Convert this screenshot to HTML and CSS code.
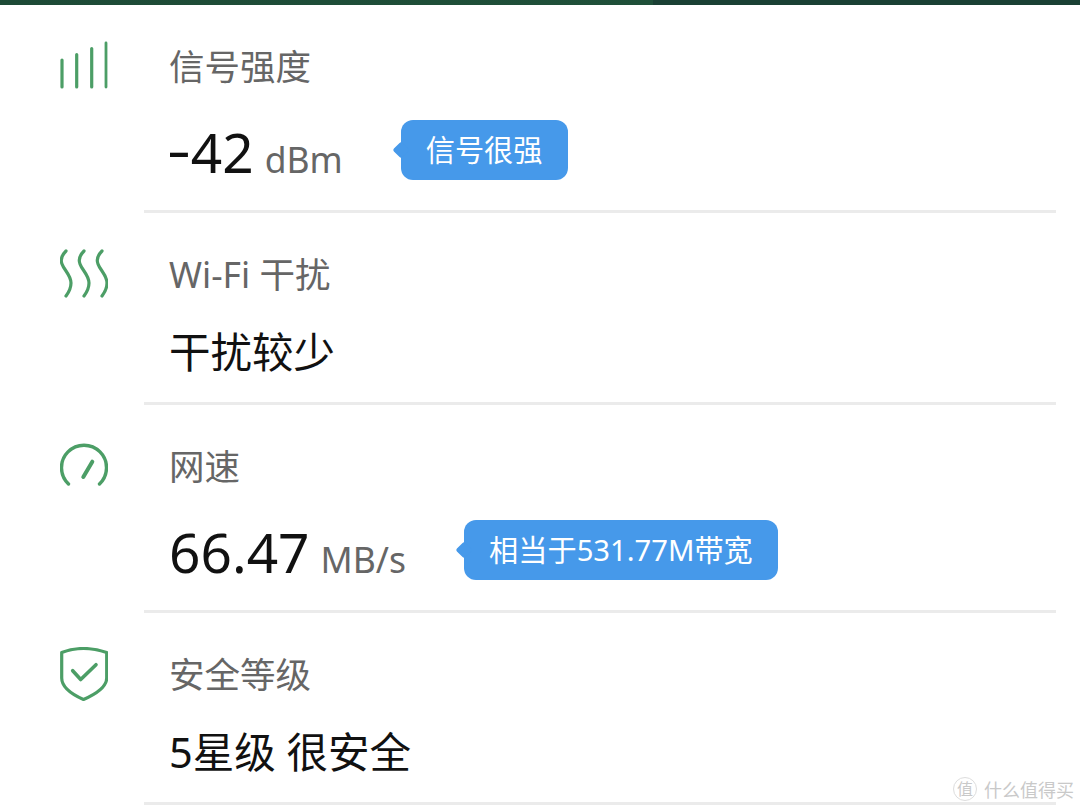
FILE: index.html
```html
<!DOCTYPE html>
<html lang="en">

<head>
    <meta charset="UTF-8">
    <meta name="viewport" content="width=device-width, initial-scale=1.0">
    <title>Wi-Fi</title>
    <link rel="stylesheet" href="styles.css">
</head>

<body>

    <div class="top-bar"></div>

    <div class="row">
        <svg class="row-icon" viewBox="0 0 48 64">
            <path d="M2 48V21M16.700 48V15.500M31.700 48V9.500" stroke-width="3.200" />
            <path d="M46 48V4" stroke-width="2.800" />
        </svg>
        <div class="row-body">
            <div class="row-title">信号强度</div>
            <div class="row-value row-value-tall">
                <span class="big-num"><span class="minus">-</span>42</span>
                <span class="unit">dBm</span>
                <span class="tag">信号很强</span>
            </div>
        </div>
    </div>

    <div class="row">
        <svg class="row-icon" viewBox="0 0 48 64">
            <path d="M6 4C2 8 0 12 2 17C4 23 11 28 11 36C11 41 9 45 6 49" stroke-width="3.200" />
            <path d="M24 4C20 8 18 12 20 17C22 23 29 28 29 36C29 41 27 45 24 49" stroke-width="3.200" />
            <path d="M42 4C38 8 36 12 38 17C40 23 47 28 47 36C47 41 45 45 42 49" stroke-width="3.200" />
        </svg>
        <div class="row-body">
            <div class="row-title">Wi-Fi 干扰</div>
            <div class="row-value">干扰较少</div>
        </div>
    </div>

    <div class="row">
        <svg class="row-icon" viewBox="0 0 48 64">
            <path d="M8.500 45A22.500 22.500 0 1 1 39.500 45" stroke-width="3.400" />
            <path d="M32.300 22.700L23.300 38" stroke-width="4" />
        </svg>
        <div class="row-body">
            <div class="row-title">网速</div>
            <div class="row-value row-value-tall">
                <span class="big-num">66.47</span>
                <span class="unit">MB/s</span>
                <span class="tag">相当于531.77M带宽</span>
            </div>
        </div>
    </div>

    <div class="row">
        <svg class="row-icon" viewBox="0 0 48 64">
            <path d="M1.700 5.500Q12 1.500 23.500 1.500T46.700 5.500V31C46.700 40 36 47 23.500 52.500C11 47 1.700 40 1.700 31Z" stroke-width="3.200" />
            <path d="M12.700 23.700L20.700 32.500L36 17.700" stroke-width="3.600" />
        </svg>
        <div class="row-body">
            <div class="row-title">安全等级</div>
            <div class="row-value">5星级 很安全</div>
        </div>
    </div>

    <div class="watermark">
        <span class="watermark-logo">值</span>
        <span>什么值得买</span>
    </div>

</body>

</html>
```

FILE: styles.css
```css
body,
html {
    margin: 0;
    padding: 0;
    height: 100%;
    width: 100%;
    overflow: hidden;
    background-color: #fff;
    font-family: "Noto Sans", "Noto Sans CJK SC", sans-serif;
}

.top-bar {
    height: 5px;
    background: linear-gradient(90deg, #1d4a36 0, #1f5039 653px, #1a4034 653px);
}

.row {
    display: flex;
    padding-left: 60px;
}

.row-icon {
    flex: none;
    width: 48px;
    height: 64px;
    margin-top: 34px;
    margin-right: 36px;
    fill: none;
    stroke: #4c9e66;
    stroke-linecap: round;
    stroke-linejoin: round;
}

.row-body {
    flex: 1;
    margin-right: 24px;
    padding-top: 44px;
    padding-left: 25px;
    padding-bottom: 20px;
    border-bottom: 3px solid #ebebeb;
}

.row-title {
    height: 36px;
    line-height: 34px;
    font-size: 35.500px;
    color: #666;
}

.row-value {
    display: flex;
    align-items: center;
    height: 66px;
    margin-top: 24px;
    margin-bottom: -1px;
    font-size: 41.500px;
    color: #111;
}

.row-value-tall {
    height: 74px;
    margin-top: 31px;
    margin-bottom: 0;
    position: relative;
    top: -3px;
}

.big-num {
    margin-top: 2px;
    font-size: 55px;
}

/* the hyphen in the reference font is wider and sits higher */
.minus {
    display: inline-block;
    margin: 0 3px 0 1px;
    transform: translateY(-3px) scaleX(1.35);
}

.unit {
    margin-left: 11px;
    margin-top: 18px;
    font-size: 35.500px;
    color: #666;
}

.tag {
    position: relative;
    height: 60px;
    line-height: 60px;
    margin-left: 58px;
    padding: 0 25px;
    border-radius: 12px;
    background-color: #4699ea;
    color: #fff;
    font-size: 29.200px;
}

.tag::before {
    content: "";
    position: absolute;
    left: -6px;
    top: 24px;
    width: 12px;
    height: 12px;
    border-radius: 2px;
    background-color: #4699ea;
    transform: rotate(45deg);
}

.watermark {
    position: absolute;
    left: 953px;
    top: 776px;
    display: flex;
    align-items: center;
    gap: 7px;
    font-size: 18px;
    color: #c9c9c9;
}

.watermark-logo {
    width: 22px;
    height: 22px;
    line-height: 22px;
    text-align: center;
    border: 1px solid #ddd;
    border-radius: 50%;
    font-size: 16px;
}
```
